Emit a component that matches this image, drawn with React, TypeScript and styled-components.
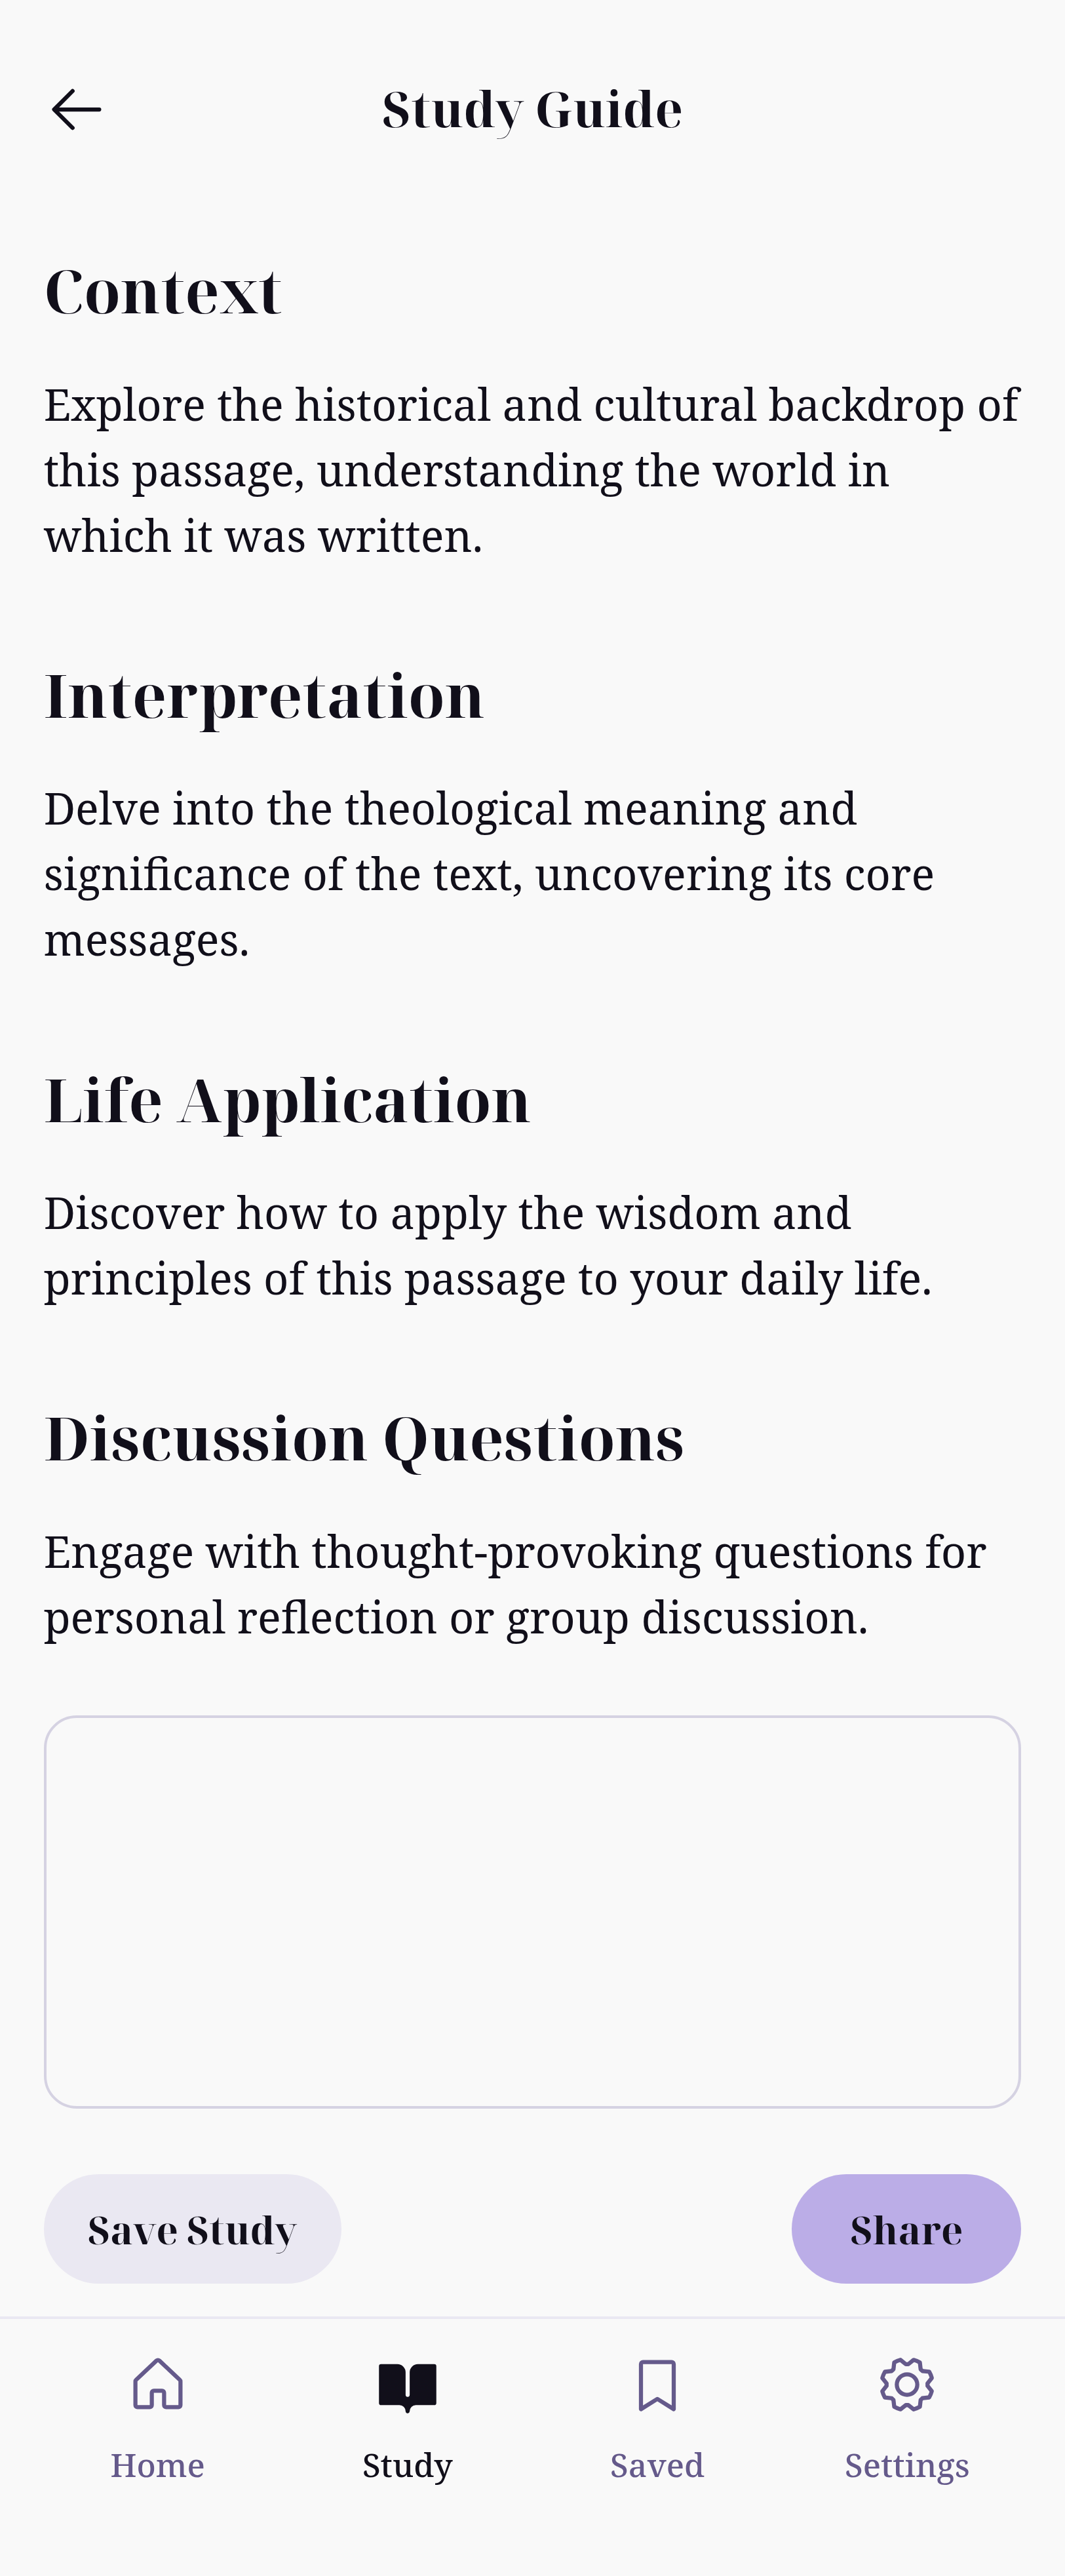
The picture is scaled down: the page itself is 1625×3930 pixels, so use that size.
import React from 'react';
import styled, { createGlobalStyle } from 'styled-components';

const colors = {
  background: '#f9f9f9',
  ink: '#110f1a',
  muted: '#655a8b',
  outline: '#d5d2e2',
  soft: '#eae8f2',
  accent: '#bbade7',
};

const bodyFont = '"Noto Serif", "DejaVu Serif", serif';
const displayFont = '"Noto Serif Display", "Noto Serif", serif';

const GlobalStyle = createGlobalStyle`
  *, *::before, *::after { box-sizing: border-box; }
  body {
    margin: 0;
    background: ${colors.background};
    color: ${colors.ink};
    font-family: ${bodyFont};
  }
`;

const Page = styled.div`
  display: flex;
  flex-direction: column;
  width: 1625px;
  height: 3930px;
  overflow: hidden;
  background: ${colors.background};
`;

const Header = styled.header`
  display: flex;
  align-items: center;
  height: 300px;
  padding: 66.67px 66.67px 33.33px;
`;

const BackButton = styled.button`
  display: flex;
  align-items: center;
  width: 200px;
  height: 200px;
  padding: 0;
  border: 0;
  background: none;
  color: ${colors.ink};
`;

const Title = styled.h1`
  flex: 1;
  margin: 0;
  padding: 0 200px 4px 0;
  font-family: ${displayFont};
  font-size: 75px;
  font-weight: 700;
  line-height: 94px;
  text-align: center;
`;

const Content = styled.main`
  display: flex;
  flex-direction: column;
  gap: 133.33px;
  padding: 83.33px 66.67px 0;
`;

const Section = styled.section`
  display: flex;
  flex-direction: column;
  gap: 62.67px;
`;

const SectionTitle = styled.h2`
  margin: 0;
  font-family: ${displayFont};
  font-size: 91.67px;
  font-weight: 700;
  line-height: 120.67px;
`;

const SectionText = styled.p`
  margin: 0;
  font-size: 66.67px;
  line-height: 100px;
`;

const Notes = styled.textarea`
  display: block;
  height: 600px;
  margin: 100px 66.67px 0;
  padding: 62.5px;
  border: 4.17px solid ${colors.outline};
  border-radius: 50px;
  outline: none;
  resize: none;
  background: transparent;
  color: ${colors.ink};
  font: 66.67px ${bodyFont};
`;

const Actions = styled.div`
  display: flex;
  justify-content: space-between;
  padding: 100.7px 66.67px 50px;
`;

const ActionButton = styled.button<{ $primary?: boolean }>`
  min-width: 350px;
  height: 166.67px;
  padding: 3px 67.4px 0;
  border: 0;
  border-radius: 84px;
  background: ${(p) => (p.$primary ? colors.accent : colors.soft)};
  color: ${colors.ink};
  font-family: ${displayFont};
  font-size: 58.33px;
  font-weight: 700;
  line-height: 87.5px;
`;

const NavBar = styled.nav`
  display: flex;
  flex: 1;
  gap: 33.33px;
  padding: 50px 66.67px 0;
  border-top: 4.17px solid ${colors.soft};
`;

const NavItem = styled.a<{ $active?: boolean }>`
  display: flex;
  flex: 1;
  flex-direction: column;
  align-items: center;
  gap: 35.5px;
  color: ${(p) => (p.$active ? colors.ink : colors.muted)};
`;

const NavLabel = styled.span`
  font-size: 50px;
  font-weight: 500;
  line-height: 75px;
`;

const IconSvg = styled.svg`
  display: block;
  width: 100px;
  height: 100px;
  fill: currentColor;
`;

const Icon = ({ path }: { path: string }) => (
  <IconSvg viewBox="0 0 256 256" aria-hidden="true">
    <path d={path} />
  </IconSvg>
);

const icons = {
  back: 'M224,128a8,8,0,0,1-8,8H59.31l58.35,58.34a8,8,0,0,1-11.32,11.32l-72-72a8,8,0,0,1,0-11.32l72-72a8,8,0,0,1,11.32,11.32L59.31,120H216A8,8,0,0,1,224,128Z',
  home: 'M218.83,103.77l-80-75.48a1.14,1.14,0,0,1-.11-.11,16,16,0,0,0-21.53,0l-.11.11L37.17,103.77A16,16,0,0,0,32,115.55V208a16,16,0,0,0,16,16H96a16,16,0,0,0,16-16V160h32v48a16,16,0,0,0,16,16h48a16,16,0,0,0,16-16V115.55A16,16,0,0,0,218.83,103.77ZM208,208H160V160a16,16,0,0,0-16-16H112a16,16,0,0,0-16,16v48H48V115.55l.11-.1L128,40l79.9,75.43.11.1Z',
  book: 'M240,56V200a8,8,0,0,1-8,8H160a24,24,0,0,0-24,23.94,7.9,7.9,0,0,1-5.12,7.55A8,8,0,0,1,120,232a24,24,0,0,0-24-24H24a8,8,0,0,1-8-8V56a8,8,0,0,1,8-8H88a32,32,0,0,1,32,32v87.73a8.17,8.17,0,0,0,7.47,8.25,8,8,0,0,0,8.53-8V80a32,32,0,0,1,32-32h64A8,8,0,0,1,240,56Z',
  bookmark: 'M184,32H72A16,16,0,0,0,56,48V224a8,8,0,0,0,12.24,6.78L128,193.43l59.77,37.35A8,8,0,0,0,200,224V48A16,16,0,0,0,184,32Zm0,16V209.57l-51.77-32.35a8,8,0,0,0-8.48,0L72,209.56V48Z',
  gear: 'M128,80a48,48,0,1,0,48,48A48.05,48.05,0,0,0,128,80Zm0,80a32,32,0,1,1,32-32A32,32,0,0,1,128,160Zm88-29.84q.06-2.16,0-4.32l14.92-18.64a8,8,0,0,0,1.48-7.06,107.21,107.21,0,0,0-10.88-26.25,8,8,0,0,0-6-3.93l-23.72-2.64q-1.48-1.56-3-3L186,40.54a8,8,0,0,0-3.94-6,107.71,107.71,0,0,0-26.25-10.87,8,8,0,0,0-7.06,1.49L130.16,40Q128,40,125.84,40L107.2,25.11a8,8,0,0,0-7.06-1.48A107.6,107.6,0,0,0,73.89,34.51a8,8,0,0,0-3.93,6L67.32,64.27q-1.56,1.49-3,3L40.54,70a8,8,0,0,0-6,3.94,107.71,107.71,0,0,0-10.87,26.25,8,8,0,0,0,1.49,7.06L40,125.84Q40,128,40,130.16L25.11,148.8a8,8,0,0,0-1.48,7.06,107.21,107.21,0,0,0,10.88,26.25,8,8,0,0,0,6,3.93l23.72,2.64q1.49,1.56,3,3L70,215.46a8,8,0,0,0,3.94,6,107.71,107.71,0,0,0,26.25,10.87,8,8,0,0,0,7.06-1.49L125.84,216q2.16.06,4.32,0l18.64,14.92a8,8,0,0,0,7.06,1.48,107.21,107.21,0,0,0,26.25-10.88,8,8,0,0,0,3.93-6l2.64-23.72q1.56-1.48,3-3L215.46,186a8,8,0,0,0,6-3.94,107.71,107.71,0,0,0,10.87-26.25,8,8,0,0,0-1.49-7.06Zm-16.1-6.5a73.93,73.93,0,0,1,0,8.68,8,8,0,0,0,1.74,5.48l14.19,17.73a91.57,91.57,0,0,1-6.23,15L187,173.11a8,8,0,0,0-5.1,2.64,74.11,74.11,0,0,1-6.14,6.14,8,8,0,0,0-2.64,5.1l-2.51,22.58a91.32,91.32,0,0,1-15,6.23l-17.74-14.19a8,8,0,0,0-5-1.75h-.48a73.93,73.93,0,0,1-8.68,0,8,8,0,0,0-5.48,1.74L100.45,215.8a91.57,91.57,0,0,1-15-6.23L82.89,187a8,8,0,0,0-2.64-5.1,74.11,74.11,0,0,1-6.14-6.14,8,8,0,0,0-5.1-2.64L46.43,170.6a91.32,91.32,0,0,1-6.23-15l14.19-17.74a8,8,0,0,0,1.74-5.48,73.93,73.93,0,0,1,0-8.68,8,8,0,0,0-1.74-5.48L40.2,100.45a91.57,91.57,0,0,1,6.23-15L69,82.89a8,8,0,0,0,5.1-2.64,74.11,74.11,0,0,1,6.14-6.14A8,8,0,0,0,82.89,69L85.4,46.43a91.32,91.32,0,0,1,15-6.23l17.74,14.19a8,8,0,0,0,5.48,1.74,73.93,73.93,0,0,1,8.68,0,8,8,0,0,0,5.48-1.74L155.55,40.2a91.57,91.57,0,0,1,15,6.23L173.11,69a8,8,0,0,0,2.64,5.1,74.11,74.11,0,0,1,6.14,6.14,8,8,0,0,0,5.1,2.64l22.58,2.51a91.32,91.32,0,0,1,6.23,15l-14.19,17.74A8,8,0,0,0,199.87,123.66Z',
};

const sections = [
  {
    title: 'Context',
    text: 'Explore the historical and cultural backdrop of this passage, understanding the world in which it was written.',
  },
  {
    title: 'Interpretation',
    text: 'Delve into the theological meaning and significance of the text, uncovering its core messages.',
  },
  {
    title: 'Life Application',
    text: 'Discover how to apply the wisdom and principles of this passage to your daily life.',
  },
  {
    title: 'Discussion Questions',
    text: 'Engage with thought-provoking questions for personal reflection or group discussion.',
  },
];

const navItems = [
  { label: 'Home', icon: icons.home, active: false },
  { label: 'Study', icon: icons.book, active: true },
  { label: 'Saved', icon: icons.bookmark, active: false },
  { label: 'Settings', icon: icons.gear, active: false },
];

export default function App() {
  return (
    <>
      <GlobalStyle />
      <Page>
        <Header>
          <BackButton aria-label="Back">
            <Icon path={icons.back} />
          </BackButton>
          <Title>Study Guide</Title>
        </Header>
        <Content>
          {sections.map((s) => (
            <Section key={s.title}>
              <SectionTitle>{s.title}</SectionTitle>
              <SectionText>{s.text}</SectionText>
            </Section>
          ))}
        </Content>
        <Notes />
        <Actions>
          <ActionButton>Save Study</ActionButton>
          <ActionButton $primary>Share</ActionButton>
        </Actions>
        <NavBar>
          {navItems.map((item) => (
            <NavItem key={item.label} $active={item.active}>
              <Icon path={item.icon} />
              <NavLabel>{item.label}</NavLabel>
            </NavItem>
          ))}
        </NavBar>
      </Page>
    </>
  );
}
